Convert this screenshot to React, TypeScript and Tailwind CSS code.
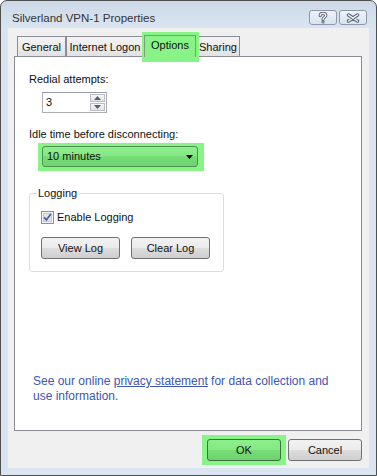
import React from 'react'

const btn =
  'h-[22px] w-[74px] rounded-[3px] border border-[#707070] bg-[linear-gradient(#f2f2f2_0%,#ebebeb_50%,#dddddd_50%,#cfcfcf_100%)] flex items-center justify-center text-[11px] leading-[13px] text-[#111]'

const CaptionButton = ({ kind }: { kind: 'help' | 'close' }) => (
  <div className="w-[28px] h-[15px] rounded-[3px] border border-[#8d99ab] bg-[linear-gradient(#eef3f8,#d9e3ee)] flex items-center justify-center">
    {kind === 'help' ? (
      <svg width="10" height="12" viewBox="0 0 10 12">
        <path d="M2.2 3.6 C2.2 1.9 3.4 1.3 5 1.3 C6.6 1.3 7.8 2.1 7.8 3.5 C7.8 5.1 5 5.4 5 7.4" fill="none" stroke="#5b6778" strokeWidth="3.2" strokeLinecap="round" />
        <circle cx="5" cy="10" r="1.6" fill="#5b6778" />
        <path d="M2.2 3.6 C2.2 1.9 3.4 1.3 5 1.3 C6.6 1.3 7.8 2.1 7.8 3.5 C7.8 5.1 5 5.4 5 7.4" fill="none" stroke="#fff" strokeWidth="1.2" strokeLinecap="round" />
        <circle cx="5" cy="10" r="0.6" fill="#fff" />
      </svg>
    ) : (
      <svg width="14" height="10" viewBox="0 0 14 10">
        <path d="M2.5 2 L11.5 8 M11.5 2 L2.5 8" stroke="#5b6778" strokeWidth="3.4" strokeLinecap="round" />
        <path d="M2.5 2 L11.5 8 M11.5 2 L2.5 8" stroke="#fff" strokeWidth="1.4" strokeLinecap="round" />
      </svg>
    )}
  </div>
)

const Tab = ({ label, width, extra = '' }: { label: string; width: string; extra?: string }) => (
  <div
    className={`${width} ${extra} h-[20px] border border-b-0 border-[#898c95] bg-[linear-gradient(#f4f4f4,#e2e2e2)] flex items-center justify-center pt-[1px] text-[11px] leading-[13px] text-[#111]`}
  >
    {label}
  </div>
)

const App = () => {
  return (
    <div className="w-[377px] h-[476px] border border-[#4f4f4f] rounded-t-[7px] overflow-hidden bg-[linear-gradient(#cdd9e8_0px,#dbe5f1_28px,#dbe5f1_100%)] flex flex-col px-[7px] pb-[7px] font-['Liberation_Sans',Arial,sans-serif]">
      {/* title bar */}
      <div className="h-[27px] shrink-0 flex items-start justify-between pl-[4px] pr-[2px]">
        <span className="mt-[9px] text-[11.5px] leading-[16px] text-[#333]">
          Silverland VPN-1 Properties
        </span>
        <div className="flex gap-[2px] mt-[9px]">
          <CaptionButton kind="help" />
          <CaptionButton kind="close" />
        </div>
      </div>

      {/* client */}
      <div className="flex-1 bg-[#f0f0f0] flex flex-col pb-[7px]">
        {/* tabs */}
        <div className="flex items-end pl-[9px] pt-[4px]">
          <Tab label="General" width="w-[49px]" />
          <Tab label="Internet Logon" width="w-[78px]" />
          <div className="relative z-10 w-[57px] h-[30px] -mb-[6px] -ml-[2px] bg-[#88f488] pl-[2px] pt-[3px]">
            <div className="w-[52px] h-[22px] border border-b-0 border-[#7f9a7f] flex justify-center pt-[3px] text-[11px] leading-[13px] text-[#111]">
              Options
            </div>
          </div>
          <Tab label="Sharing" width="w-[44px]" extra="-ml-[3px]" />
        </div>

        {/* panel */}
        <div className="flex-1 ml-[6px] mr-[7px] bg-white border border-[#898c95] flex flex-col pl-[14px] pt-[16px] pb-[26px] text-[11px] leading-[13px] text-[#111]">
          <span>Redial attempts:</span>
          <div className="ml-[13px] mt-[6px] w-[65px] h-[21px] border border-[#abadb3] border-t-[#979aa2] flex items-stretch">
            <span className="flex-1 pl-[3px] pt-[3px]">3</span>
            <div className="w-[17px] flex flex-col p-[1px] gap-[1px]">
              {['up', 'down'].map((d) => (
                <div
                  key={d}
                  className="flex-1 border border-[#b9bcc2] bg-[linear-gradient(#f6f6f6,#e3e3e3)] flex items-center justify-center"
                >
                  <svg width="7" height="4" viewBox="0 0 7 4">
                    <path d={d === 'up' ? 'M0 4 L3.5 0 L7 4 Z' : 'M0 0 L3.5 4 L7 0 Z'} fill="#4d5f7d" />
                  </svg>
                </div>
              ))}
            </div>
          </div>

          <span className="mt-[15px]">Idle time before disconnecting:</span>
          <div className="ml-[9px] mt-[2px] w-[166px] h-[28px] bg-[#88f488] pl-[4px] pr-[6px] pt-[3px] pb-[4px]">
            <div className="h-full rounded-[3px] border border-[#4f8f4f] bg-[linear-gradient(#8cef8c_0%,#84e884_50%,#76dc76_50%,#6fd36f_100%)] flex items-center justify-between pl-[4px] pr-[4px]">
              <span>10 minutes</span>
              <svg width="7" height="4" viewBox="0 0 7 4">
                <path d="M0 0 L7 0 L3.5 4 Z" fill="#000" />
              </svg>
            </div>
          </div>

          <fieldset className="mt-[16px] w-[195px] border border-[#d5dfe5] rounded-[3px] pl-[11px] pb-[12px]">
            <legend className="-ml-[4px] px-[1px]">Logging</legend>
            <label className="mt-[11px] flex items-center gap-[3px] h-[13px]">
              <svg width="13" height="13" viewBox="0 0 13 13">
                <rect x="0.5" y="0.5" width="12" height="12" fill="#f4f4f4" stroke="#8e8f8f" />
                <rect x="2.5" y="2.5" width="8" height="8" fill="#e2e4e8" stroke="#c4c8cf" />
                <path d="M3.2 6.4 L5.4 9 L9.8 3" fill="none" stroke="#4b5d96" strokeWidth="1.7" />
              </svg>
              <span>Enable Logging</span>
            </label>
            <div className="mt-[13px] flex gap-[11px]">
              <div className={`${btn} w-[79px] h-[21px]`}>View Log</div>
              <div className={`${btn} w-[79px] h-[21px]`}>Clear Log</div>
            </div>
          </fieldset>

          <p className="mt-auto ml-[4px] text-[12px] leading-[15px] text-[#3d56b0]">
            See our online <span className="underline">privacy statement</span> for data collection and
            <br />
            use information.
          </p>
        </div>

        {/* buttons */}
        <div className="mt-[8px] flex justify-end gap-[7px] pr-[7px]">
          <div className="-mx-[5px] -my-[4px] px-[5px] py-[4px] bg-[#88f488]">
            <div className="h-[22px] w-[74px] rounded-[3px] border border-[#3f6f3f] bg-[linear-gradient(#8cef8c_0%,#84e884_50%,#76dc76_50%,#6fd36f_100%)] flex items-center justify-center text-[11px] leading-[13px] text-[#111]">
              OK
            </div>
          </div>
          <div className={btn}>Cancel</div>
        </div>
      </div>
    </div>
  )
}

export default App
